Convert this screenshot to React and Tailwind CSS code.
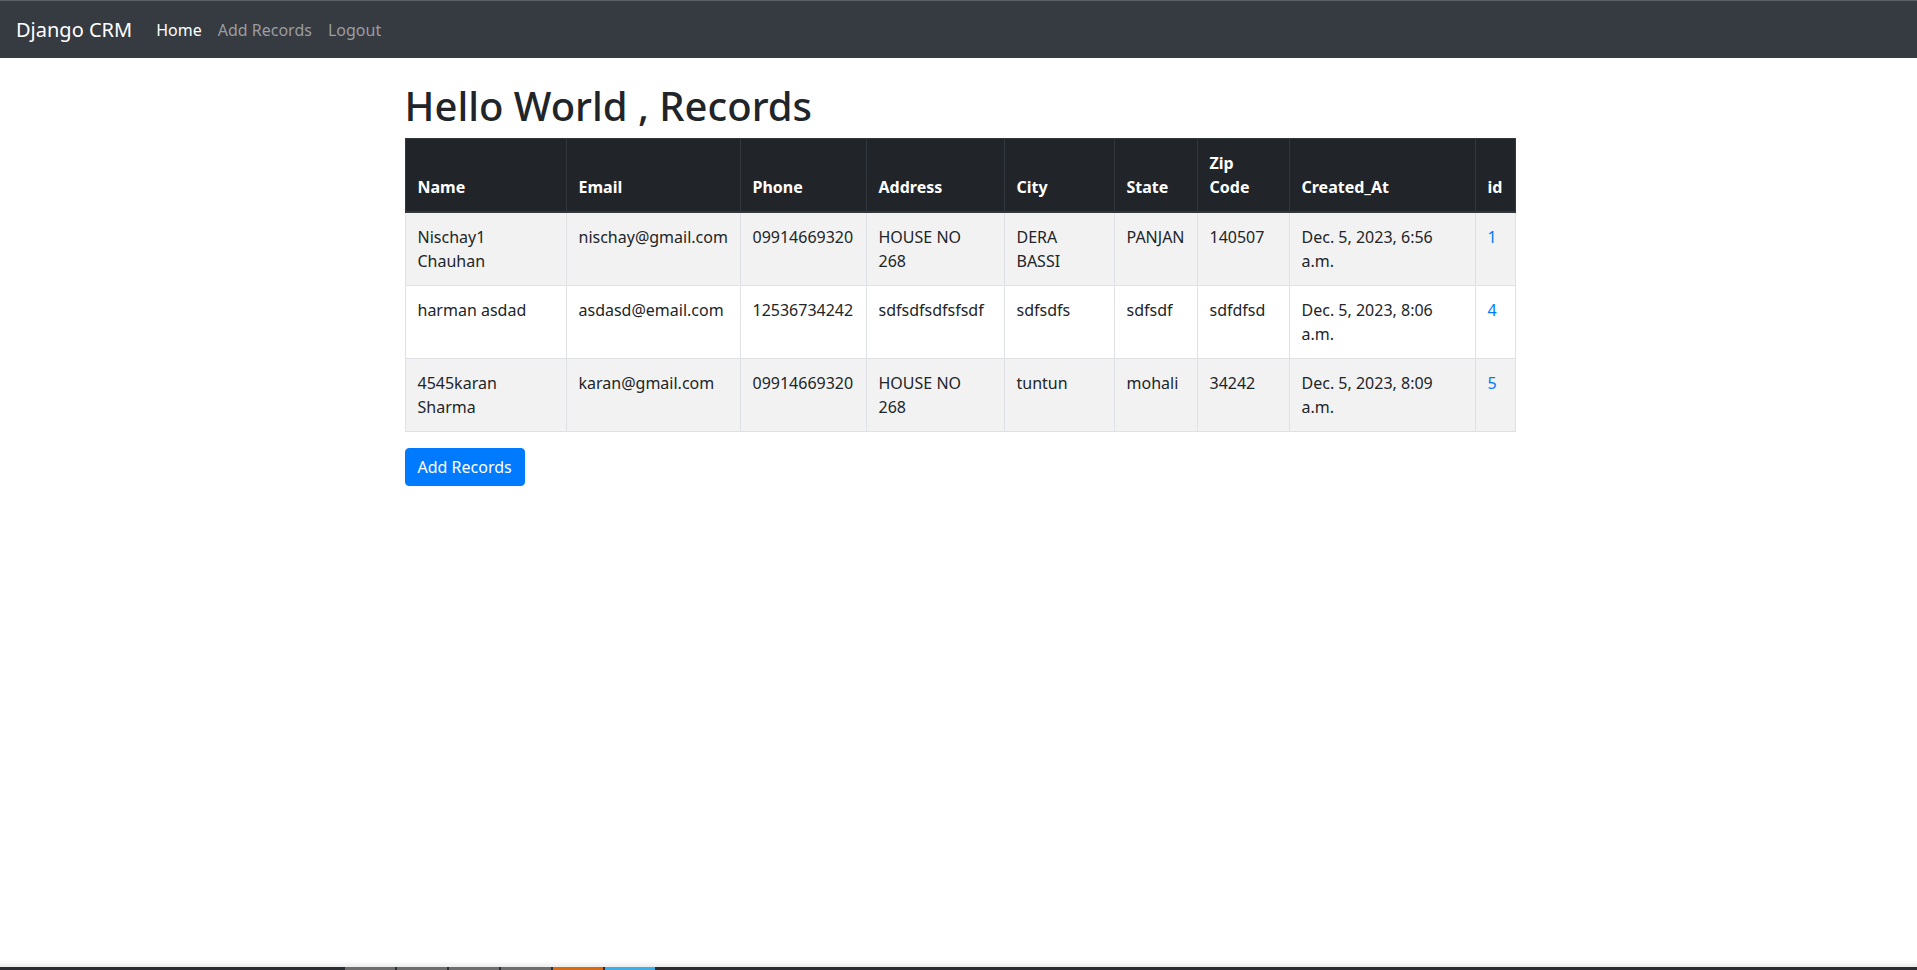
const records = [
  {
    name: "Nischay1 Chauhan",
    email: "nischay@gmail.com",
    phone: "09914669320",
    address: "HOUSE NO 268",
    city: "DERA BASSI",
    state: "PANJAN",
    zip: "140507",
    created: "Dec. 5, 2023, 6:56 a.m.",
    id: 1,
  },
  {
    name: "harman asdad",
    email: "asdasd@email.com",
    phone: "12536734242",
    address: "sdfsdfsdfsfsdf",
    city: "sdfsdfs",
    state: "sdfsdf",
    zip: "sdfdfsd",
    created: "Dec. 5, 2023, 8:06 a.m.",
    id: 4,
  },
  {
    name: "4545karan Sharma",
    email: "karan@gmail.com",
    phone: "09914669320",
    address: "HOUSE NO 268",
    city: "tuntun",
    state: "mohali",
    zip: "34242",
    created: "Dec. 5, 2023, 8:09 a.m.",
    id: 5,
  },
];

const columns = [
  { label: "Name", width: "w-[161px]" },
  { label: "Email", width: "w-[174px]" },
  { label: "Phone", width: "w-[126px]" },
  { label: "Address", width: "w-[138px]" },
  { label: "City", width: "w-[110px]" },
  { label: "State", width: "w-[83px]" },
  { label: "Zip Code", width: "w-[92px]" },
  { label: "Created_At", width: "w-[186px]" },
  { label: "id", width: "w-[40px]" },
];

const td = "p-3 align-top border border-[#dee2e6]";

function Navbar() {
  return (
    <nav className="h-[58px] border-t border-[#5a5e65] bg-[#363a41] px-4 flex items-center">
      <a href="#" className="text-[20px] leading-[30px] text-white mr-4">
        Django CRM
      </a>
      <div className="flex items-center text-base leading-6">
        <a href="#" className="px-2 text-white">Home</a>
        <a href="#" className="px-2 text-[#9b9da0]">Add Records</a>
        <a href="#" className="px-2 text-[#9b9da0]">Logout</a>
      </div>
    </nav>
  );
}

function RecordsTable() {
  return (
    <table className="w-full table-fixed mb-4 border border-[#dee2e6] text-base leading-6 text-[#212529]">
      <thead className="bg-[#212529] text-white">
        <tr>
          {columns.map((c) => (
            <th
              key={c.label}
              className={`${c.width} p-3 text-left align-bottom font-bold border border-[#32383e] border-b-2`}
            >
              {c.label}
            </th>
          ))}
        </tr>
      </thead>
      <tbody>
        {records.map((r, i) => (
          <tr key={r.id} className={i % 2 === 0 ? "bg-[#f2f2f2]" : "bg-white"}>
            <td className={td}>{r.name}</td>
            <td className={td}>{r.email}</td>
            <td className={td}>{r.phone}</td>
            <td className={td}>{r.address}</td>
            <td className={td}>{r.city}</td>
            <td className={td}>{r.state}</td>
            <td className={td}>{r.zip}</td>
            <td className={td}>{r.created}</td>
            <td className={td}>
              <a href="#" className="text-[#007bff]">{r.id}</a>
            </td>
          </tr>
        ))}
      </tbody>
    </table>
  );
}

export default function App() {
  return (
    <div className="min-h-screen flex flex-col bg-white font-['Noto_Sans',sans-serif]">
      <Navbar />

      <main className="flex-1">
        <div className="w-[1112px] mx-auto pl-[2px] pt-[24px]">
          <h1 className="text-[40px] leading-[48px] font-medium text-[#212529] mb-2">
            Hello World , Records
          </h1>
          <RecordsTable />
          <button className="bg-[#007bff] border border-[#007bff] text-white text-base leading-6 px-3 py-1.5 rounded-[4px]">
            Add Records
          </button>
        </div>
      </main>

      {/* taskbar edge seen at the bottom of the capture */}
      <div className="h-[6px] bg-gradient-to-b from-white to-[#ececec]" />
      <div className="h-[3px] bg-[#2a2d31] flex pl-[345px] gap-[2px]">
        <div className="w-[50px] bg-[#6e6e6e]" />
        <div className="w-[50px] bg-[#6e6e6e]" />
        <div className="w-[50px] bg-[#6e6e6e]" />
        <div className="w-[50px] bg-[#6e6e6e]" />
        <div className="w-[50px] bg-[#d86b12]" />
        <div className="w-[50px] bg-[#3daee9]" />
      </div>
    </div>
  );
}
